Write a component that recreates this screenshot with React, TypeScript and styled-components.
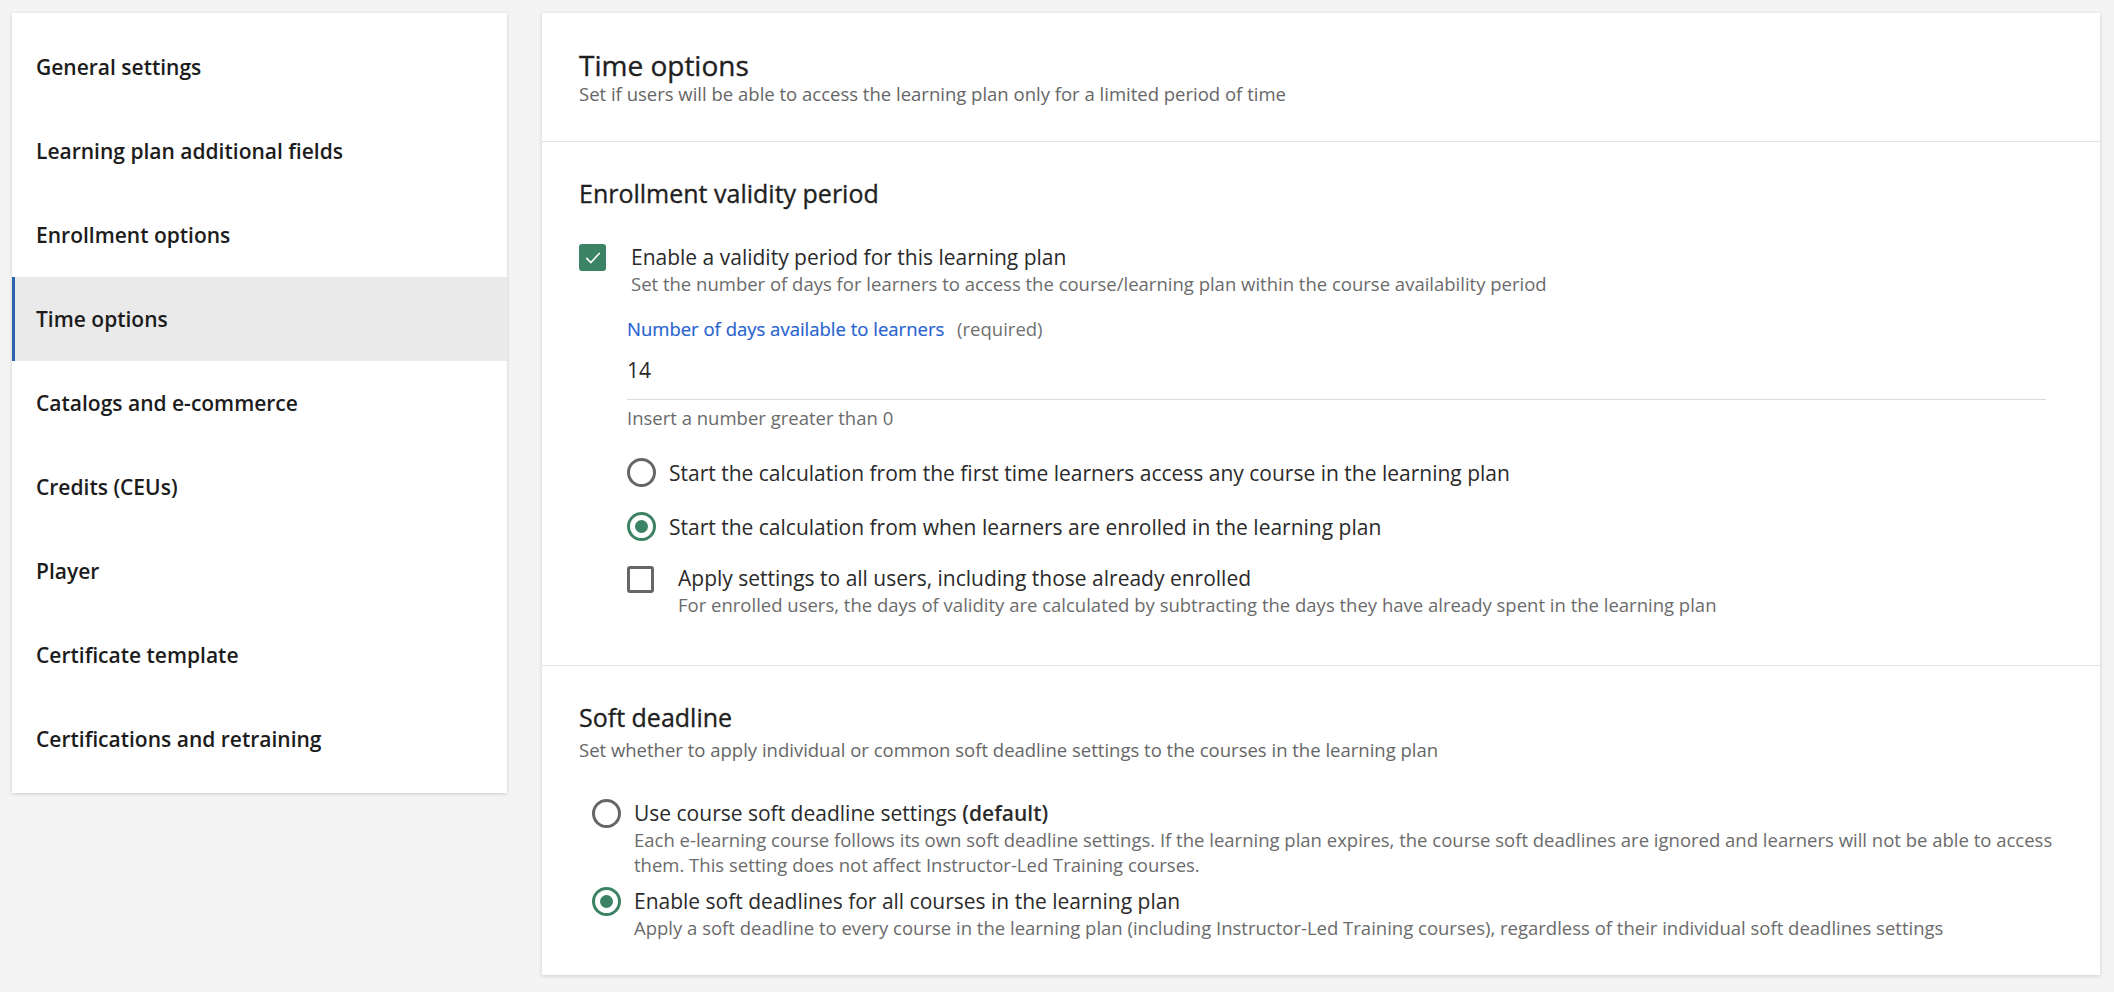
import React from "react";
import styled, { createGlobalStyle } from "styled-components";

const GlobalStyle = createGlobalStyle`
  body {
    margin: 0;
    background: #f4f4f4;
    font-family: "Open Sans", "Noto Sans", Arial, sans-serif;
    color: #222;
  }
`;

const GREEN = "#3c8265";

const menu = [
  "General settings",
  "Learning plan additional fields",
  "Enrollment options",
  "Time options",
  "Catalogs and e-commerce",
  "Credits (CEUs)",
  "Player",
  "Certificate template",
  "Certifications and retraining",
];

const CheckBox: React.FC<{ checked?: boolean }> = ({ checked }) => (
  <Box $checked={checked}>
    {checked && (
      <svg width="20" height="20" viewBox="0 0 24 24" fill="none">
        <path d="M4.5 12.5l5 5L19.5 6.5" stroke="#fff" strokeWidth="1.9" strokeLinecap="round" strokeLinejoin="round" />
      </svg>
    )}
  </Box>
);

const App: React.FC = () => {
  return (
    <>
      <GlobalStyle />
      <Page>
        <Sidebar>
          {menu.map((m) => (
            <NavItem key={m} $active={m === "Time options"}>{m}</NavItem>
          ))}
        </Sidebar>
        <Card>
          <Header>
            <PageTitle>Time options</PageTitle>
            <Subtitle>Set if users will be able to access the learning plan only for a limited period of time</Subtitle>
          </Header>

          <Section $pb={47}>
            <SectionTitle>Enrollment validity period</SectionTitle>
            <CheckRow>
              <CheckBox checked />
              <Texts>
                <Label>Enable a validity period for this learning plan</Label>
                <Desc>Set the number of days for learners to access the course/learning plan within the course availability period</Desc>
              </Texts>
            </CheckRow>

            <Field>
              <FieldLabel>
                Number of days available to learners <Required>(required)</Required>
              </FieldLabel>
              <Input>14</Input>
              <Helper>Insert a number greater than 0</Helper>

              <RadioList>
                <RadioRow>
                  <Radio />
                  <Label>Start the calculation from the first time learners access any course in the learning plan</Label>
                </RadioRow>
                <RadioRow>
                  <Radio $checked />
                  <Label>Start the calculation from when learners are enrolled in the learning plan</Label>
                </RadioRow>
              </RadioList>

              <ApplyRow>
                <CheckBox />
                <Texts>
                  <Label>Apply settings to all users, including those already enrolled</Label>
                  <Desc>For enrolled users, the days of validity are calculated by subtracting the days they have already spent in the learning plan</Desc>
                </Texts>
              </ApplyRow>
            </Field>
          </Section>

          <Section $pb={35} $last>
            <SectionTitle>Soft deadline</SectionTitle>
            <SectionDesc>Set whether to apply individual or common soft deadline settings to the courses in the learning plan</SectionDesc>
            <OptionList>
              <Option>
                <Radio />
                <Texts>
                  <Label>Use course soft deadline settings <b>(default)</b></Label>
                  <OptionDesc>
                    Each e-learning course follows its own soft deadline settings. If the learning plan expires, the course soft deadlines are ignored and learners will not be able to access them. This setting does not affect Instructor-Led Training courses.
                  </OptionDesc>
                </Texts>
              </Option>
              <Option>
                <Radio $checked />
                <Texts>
                  <Label>Enable soft deadlines for all courses in the learning plan</Label>
                  <OptionDesc>
                    Apply a soft deadline to every course in the learning plan (including Instructor-Led Training courses), regardless of their individual soft deadlines settings
                  </OptionDesc>
                </Texts>
              </Option>
            </OptionList>
          </Section>
        </Card>
      </Page>
    </>
  );
};

const Page = styled.div`
  display: flex;
  align-items: flex-start;
  gap: 35px;
  padding: 13px 14px 17px 12px;
`;

const Sidebar = styled.nav`
  width: 495px;
  flex-shrink: 0;
  background: #fff;
  padding: 12px 0;
  box-shadow: 0 1px 4px rgba(0, 0, 0, 0.16);
`;

const NavItem = styled.div<{ $active?: boolean }>`
  height: 84px;
  display: flex;
  align-items: center;
  padding-left: ${(p) => (p.$active ? 21 : 24)}px;
  border-left: ${(p) => (p.$active ? "3px solid #2d62ad" : "none")};
  background: ${(p) => (p.$active ? "#eaeaea" : "transparent")};
  font-size: 21px;
  font-weight: 600;
  color: #1c1c1c;
`;

const Card = styled.main`
  flex: 1;
  background: #fff;
  box-shadow: 0 1px 4px rgba(0, 0, 0, 0.16);
`;

const Header = styled.header`
  padding: 35px 37px 34px;
  border-bottom: 1px solid #e3e3e3;
`;

// medium weight look: regular face with a hairline stroke
const PageTitle = styled.h1`
  margin: 0;
  font-size: 28px;
  line-height: 34px;
  font-weight: 400;
  -webkit-text-stroke: 0.35px currentColor;
  color: #1f1f1f;
`;

const Subtitle = styled.p`
  margin: -1px 0 0;
  font-size: 18.5px;
  line-height: 26px;
  color: #666;
`;

const Section = styled.section<{ $pb: number; $last?: boolean }>`
  padding: 35px 36px ${(p) => p.$pb}px 37px;
  border-bottom: ${(p) => (p.$last ? "none" : "1px solid #e3e3e3")};
`;

const SectionTitle = styled.h2`
  margin: 0;
  font-size: 25px;
  line-height: 32px;
  font-weight: 400;
  -webkit-text-stroke: 0.35px currentColor;
  color: #1f1f1f;
`;

const SectionDesc = styled.p`
  margin: 4px 0 0;
  font-size: 18.5px;
  line-height: 26px;
  color: #666;
`;

const CheckRow = styled.div`
  display: flex;
  align-items: flex-start;
  gap: 25px;
  margin-top: 34px;

  & > span {
    margin-top: 1px;
  }
`;

const Box = styled.span<{ $checked?: boolean }>`
  width: 27px;
  height: 27px;
  flex-shrink: 0;
  box-sizing: border-box;
  border-radius: 3px;
  display: flex;
  align-items: center;
  justify-content: center;
  background: ${(p) => (p.$checked ? GREEN : "#fff")};
  border: ${(p) => (p.$checked ? "none" : "3px solid #666")};
`;

const Texts = styled.div`
  display: flex;
  flex-direction: column;
`;

const Label = styled.div`
  font-size: 21px;
  line-height: 28px;
  color: #2a2a2a;

  b {
    font-weight: 600;
  }
`;

const Desc = styled.div`
  font-size: 18.5px;
  line-height: 26px;
  color: #6b6b6b;
`;

const Field = styled.div`
  margin: 19px 18px 0 48px;
`;

const FieldLabel = styled.div`
  font-size: 18.5px;
  line-height: 26px;
  color: #2863d0;
  -webkit-text-stroke: 0.2px currentColor;
`;

const Required = styled.span`
  margin-left: 8px;
  color: #707070;
  -webkit-text-stroke: 0;
`;

const Input = styled.div`
  padding: 14px 0 15px;
  font-size: 21px;
  line-height: 28px;
  color: #2a2a2a;
  border-bottom: 1px solid #dcdcdc;
`;

const Helper = styled.div`
  margin-top: 5px;
  font-size: 18.5px;
  line-height: 26px;
  color: #6b6b6b;
`;

const RadioList = styled.div`
  display: flex;
  flex-direction: column;
  gap: 25px;
  margin-top: 27px;
`;

const RadioRow = styled.div`
  display: flex;
  align-items: center;
  gap: 13px;
`;

const Radio = styled.span<{ $checked?: boolean }>`
  width: 29px;
  height: 29px;
  flex-shrink: 0;
  box-sizing: border-box;
  border-radius: 50%;
  border: 3px solid ${(p) => (p.$checked ? GREEN : "#666")};
  display: flex;
  align-items: center;
  justify-content: center;

  &::after {
    content: "";
    width: 13px;
    height: 13px;
    border-radius: 50%;
    background: ${(p) => (p.$checked ? GREEN : "transparent")};
  }
`;

const ApplyRow = styled.div`
  display: flex;
  align-items: flex-start;
  gap: 24px;
  margin-top: 23px;

  & > span {
    margin-top: 2px;
  }
`;

const OptionList = styled.div`
  display: flex;
  flex-direction: column;
  gap: 10px;
  margin: 36px 0 0 13px;
`;

const Option = styled.div`
  display: flex;
  align-items: flex-start;
  gap: 13px;
`;

const OptionDesc = styled.div`
  font-size: 18.5px;
  line-height: 25px;
  color: #6b6b6b;
`;

export default App;
